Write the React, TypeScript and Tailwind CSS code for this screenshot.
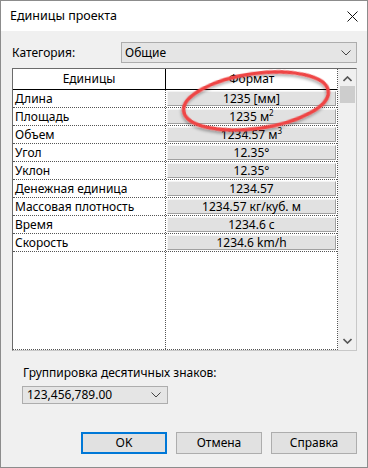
import React from "react";

const rows: { name: string; value: React.ReactNode }[] = [
  { name: "Длина", value: "1235 [мм]" },
  { name: "Площадь", value: <>1235 м<sup className="text-[8px]">2</sup></> },
  { name: "Объем", value: <>1234.57 м<sup className="text-[8px]">3</sup></> },
  { name: "Угол", value: "12.35°" },
  { name: "Уклон", value: "12.35°" },
  { name: "Денежная единица", value: "1234.57" },
  { name: "Массовая плотность", value: "1234.57 кг/куб. м" },
  { name: "Время", value: "1234.6 с" },
  { name: "Скорость", value: "1234.6 km/h" },
];

function Chevron({ className = "" }: { className?: string }) {
  return (
    <svg width="10" height="6" viewBox="0 0 10 6" className={className}>
      <path d="M0.5 0.5 L5 5 L9.5 0.5" fill="none" stroke="#444" strokeWidth="1" />
    </svg>
  );
}

function Button({ label, primary = false }: { label: string; primary?: boolean }) {
  return (
    <div
      className={
        "flex h-[22px] w-[86px] items-center justify-center bg-[#e1e1e1] text-[12px] " +
        (primary ? "border-2 border-[#0078d7]" : "border border-[#adadad]")
      }
    >
      {label}
    </div>
  );
}

export default function App() {
  return (
    <div className="relative flex h-[468px] w-[368px] flex-col border border-[#8c8c8c] bg-[#f0f0f0] font-['Noto_Sans',sans-serif] text-[12px] leading-none text-black">
      {/* title bar */}
      <div className="flex h-[30px] items-center justify-between bg-white pl-[9px] pr-[9px]">
        <span className="text-[12.5px]">Единицы проекта</span>
        <svg width="11" height="11" viewBox="0 0 11 11">
          <path d="M0.5 0.5 L10.5 10.5 M10.5 0.5 L0.5 10.5" stroke="#111" strokeWidth="1" />
        </svg>
      </div>

      <div className="flex flex-col px-[10px] pt-[11px]">
        {/* category */}
        <div className="flex h-[21px] items-center">
          <span className="w-[110px] pl-[1px]">Категория:</span>
          <div className="flex h-[21px] flex-1 items-center justify-between border border-[#adadad] bg-[#e5e5e5] pl-[3px] pr-[5px]">
            <span>Общие</span>
            <Chevron />
          </div>
        </div>

        {/* table */}
        <div className="mt-[5px] ml-[1px] flex h-[283px] border border-t-[#6b6b6b] border-l-[#6b6b6b] border-r-[#c8c8c8] border-b-[#c8c8c8] bg-white">
          <div className="flex flex-1 flex-col border-r border-b border-dotted border-[#555]">
            <div className="flex h-[21px] border-b border-black">
              <div className="flex w-[153px] items-center justify-center border-r border-black">Единицы</div>
              <div className="flex flex-1 items-center justify-center">Формат</div>
            </div>
            {rows.map((r) => (
              <div key={r.name} className="flex h-[18px] border-b border-dotted border-[#555]">
                <div className="flex w-[153px] items-center border-r border-dotted border-[#555] pl-[2px]">{r.name}</div>
                <div className="flex flex-1 p-[1px]">
                  <div className="flex flex-1 items-center justify-center border-t border-l border-b border-r border-t-[#f4f4f4] border-l-[#f4f4f4] border-b-[#a0a0a0] border-r-[#a0a0a0] bg-[#e1e1e1]">
                    {r.value}
                  </div>
                </div>
              </div>
            ))}
            <div className="flex flex-1">
              <div className="w-[153px] border-r border-dotted border-[#555]" />
            </div>
          </div>
          {/* scrollbar */}
          <div className="flex w-[18px] flex-col items-center bg-[#f0f0f0]">
            <svg width="9" height="6" viewBox="0 0 9 6" className="mt-[7px]">
              <path d="M0.5 5 L4.5 1 L8.5 5" fill="none" stroke="#555" strokeWidth="1.6" />
            </svg>
            <div className="mt-[4px] h-[17px] w-[15px] bg-[#cdcdcd]" />
            <div className="flex-1" />
            <svg width="9" height="6" viewBox="0 0 9 6" className="mb-[6px]">
              <path d="M0.5 1 L4.5 5 L8.5 1" fill="none" stroke="#555" strokeWidth="1.6" />
            </svg>
          </div>
        </div>

        {/* decimal grouping */}
        <div className="mt-[16px] pl-[12px]">Группировка десятичных знаков:</div>
        <div className="mt-[7px] ml-[11px] flex h-[18px] w-[146px] items-center justify-between border border-[#adadad] bg-[#e5e5e5] pl-[4px] pr-[6px]">
          <span>123,456,789.00</span>
          <Chevron />
        </div>

        {/* buttons */}
        <div className="mt-[28px] flex justify-end gap-[9px]">
          <Button label="OK" primary />
          <Button label="Отмена" />
          <Button label="Справка" />
        </div>
      </div>

      {/* red annotation */}
      <svg
        className="pointer-events-none absolute left-0 top-0"
        width="368"
        height="468"
        viewBox="0 0 368 468"
      >
        <defs>
          <filter id="sh" x="-20%" y="-40%" width="140%" height="180%">
            <feDropShadow dx="-1" dy="2" stdDeviation="1.5" floodColor="#000" floodOpacity="0.35" />
          </filter>
        </defs>
        <ellipse
          cx="255"
          cy="100"
          rx="73"
          ry="27.5"
          transform="rotate(-8 255 100)"
          fill="none"
          stroke="#ef4444"
          strokeWidth="3.5"
          filter="url(#sh)"
        />
      </svg>
    </div>
  );
}
